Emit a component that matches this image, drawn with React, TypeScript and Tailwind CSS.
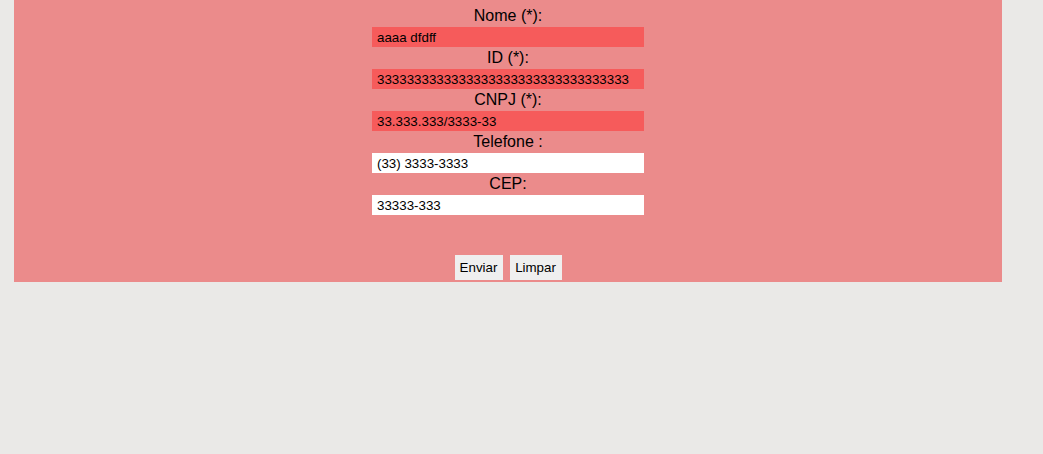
const fields = [
  { label: "Nome (*):", value: "aaaa dfdff", invalid: true },
  { label: "ID (*):", value: "3333333333333333333333333333333333", invalid: true },
  { label: "CNPJ (*):", value: "33.333.333/3333-33", invalid: true },
  { label: "Telefone :", value: "(33) 3333-3333", invalid: false },
  { label: "CEP:", value: "33333-333", invalid: false },
];

const App = () => {
  return (
    <div className="min-h-[454px] w-full bg-[#eae9e7] font-['Liberation_Sans',Arial,sans-serif] text-black">
      <form
        className="ml-[14px] flex h-[282px] w-[988px] flex-col items-center bg-[#eb8b8b] pt-[5px]"
        onSubmit={(e) => e.preventDefault()}
      >
        {fields.map((field) => (
          <div key={field.label} className="flex w-[272px] flex-col">
            <label className="h-[22px] text-center text-[16px] leading-[22px]">
              {field.label}
            </label>
            <input
              defaultValue={field.value}
              className={`h-[20px] w-[272px] px-[5px] text-[13.33px] outline-none ${
                field.invalid ? "bg-[#f65b5b]" : "bg-white"
              }`}
            />
          </div>
        ))}
        <div className="mt-[40px] flex gap-[7px]">
          <button
            type="submit"
            className="h-[25px] w-[48px] bg-[#efefef] text-[13.33px]"
          >
            Enviar
          </button>
          <button
            type="reset"
            className="h-[25px] w-[52px] bg-[#efefef] text-[13.33px]"
          >
            Limpar
          </button>
        </div>
      </form>
    </div>
  );
};

export default App;
